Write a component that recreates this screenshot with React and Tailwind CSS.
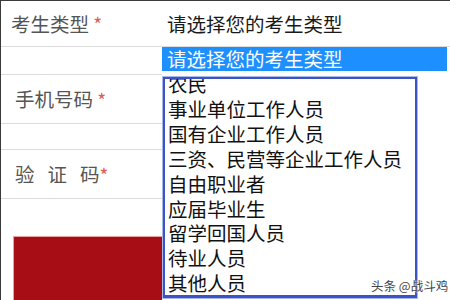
const font = { fontFamily: '"Noto Sans CJK SC", "Noto Sans", sans-serif' };

const options = [
  "农民",
  "事业单位工作人员",
  "国有企业工作人员",
  "三资、民营等企业工作人员",
  "自由职业者",
  "应届毕业生",
  "留学回国人员",
  "待业人员",
  "其他人员",
];

function Star({ space = true }) {
  return (
    <span className="text-[#e25b5b] text-[19px] relative top-[1px]">
      {space ? "\u00a0*" : "*"}
    </span>
  );
}

export default function App() {
  return (
    <div
      className="relative w-[450px] h-[300px] overflow-hidden bg-white border-t border-l border-[#3a3a3a]"
      style={font}
    >
      {/* 考生类型 */}
      <div className="flex h-[46px] border-b border-[#dcdcdc]">
        <div className="w-[162px] flex items-center pl-[10px] text-[19.5px] text-[#555]">
          考生类型
          <Star />
        </div>
        <div className="flex items-center pl-[4px] text-[19.5px] text-[#1a1a1a]">
          请选择您的考生类型
        </div>
      </div>

      <div className="flex">
        {/* left column */}
        <div className="w-[161px] shrink-0 flex flex-col">
          <div className="h-[28px] border-b border-[#dcdcdc]" />
          <div className="h-[49px] border-b border-[#dcdcdc] flex items-center pl-[14px] text-[19.5px] text-[#555]">
            手机号码
            <Star />
          </div>
          <div className="h-[26px] border-b border-[#dcdcdc]" />
          <div className="h-[49px] border-b border-[#dcdcdc] flex items-center pl-[14px] text-[19.5px] text-[#555]">
            <span>验</span>
            <span className="ml-[13px]">证</span>
            <span className="ml-[13px]">码</span>
            <Star space={false} />
          </div>
          <div className="h-[37px]" />
          <div className="ml-[12px] h-[70px] bg-[#a60d15] border border-[#eaa3a3] border-r-0" />
        </div>

        {/* dropdown */}
        <div className="flex flex-col">
          <div className="w-[285px] h-[24px] bg-[#1e8fff] text-white text-[19.5px] leading-[24px] pl-[5px] whitespace-nowrap">
            请选择您的考生类型
          </div>
          <div className="mt-[5px] w-[256px] h-[223px] border border-[#a8b8e8]">
            <div className="h-full border-2 border-[#3b53c6] border-b-[3px] overflow-hidden bg-white">
              <div className="-mt-[7px] pl-[3px] text-[19.5px] leading-[24.9px] text-[#111] whitespace-nowrap">
                {options.map((o) => (
                  <div key={o}>{o}</div>
                ))}
              </div>
            </div>
          </div>
        </div>
      </div>

      {/* watermark */}
      <div
        className="absolute left-[370px] top-[276px] text-[12.5px] text-[#444] whitespace-nowrap"
        style={{ textShadow: "0 0 2px #fff, 0 0 2px #fff" }}
      >
        头条 @战斗鸡
      </div>
    </div>
  );
}
